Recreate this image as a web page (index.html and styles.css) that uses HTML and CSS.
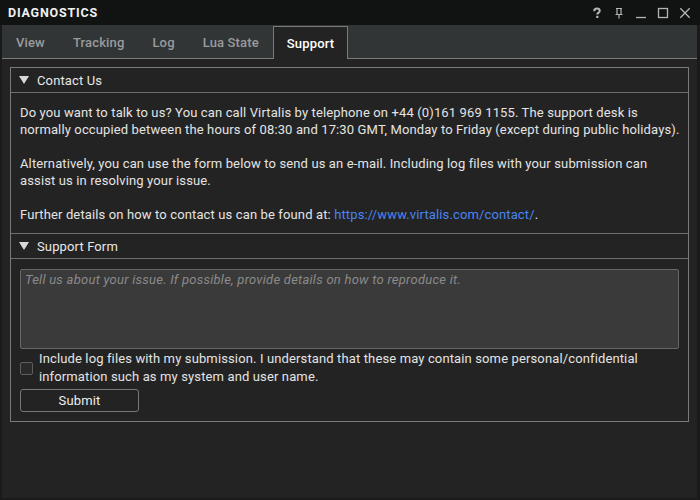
FILE: index.html
```html
<!DOCTYPE html>
<html>
<head>
<meta charset="utf-8">
<link rel="stylesheet" href="styles.css">
</head>
<body>
<div class="window">
  <div class="titlebar">
    <span class="title">DIAGNOSTICS</span>
    <div class="controls">
      <svg class="ctl" width="12" height="12" viewBox="0 0 12 12"><path d="M3.2 4.2 C3.2 2.5 4.4 1.6 6 1.6 C7.6 1.6 8.7 2.5 8.7 3.9 C8.7 5.6 6.3 5.7 6.3 7.6" fill="none" stroke="#b4b4b4" stroke-width="2"/><rect x="5.2" y="8.8" width="2.2" height="2.2" fill="#b4b4b4"/></svg>
      <svg class="ctl" width="12" height="12" viewBox="0 0 12 12"><path d="M3 1.5 H9 M4 1.5 V7 M8 1.5 V7 M2.5 7.5 H9.5 M6 7.5 V11.5" fill="none" stroke="#b4b4b4" stroke-width="1.2"/></svg>
      <svg class="ctl" width="12" height="12" viewBox="0 0 12 12"><path d="M1 10.5 H11" stroke="#b4b4b4" stroke-width="1.3"/></svg>
      <svg class="ctl" width="12" height="12" viewBox="0 0 12 12"><rect x="1.5" y="1.5" width="9" height="9" fill="none" stroke="#b4b4b4" stroke-width="1.3"/></svg>
      <svg class="ctl" width="12" height="12" viewBox="0 0 12 12"><path d="M1.3 1.3 L10.7 10.7 M10.7 1.3 L1.3 10.7" stroke="#b4b4b4" stroke-width="1.3"/></svg>
    </div>
  </div>
  <div class="tabbar">
    <div class="tab">View</div>
    <div class="tab">Tracking</div>
    <div class="tab">Log</div>
    <div class="tab">Lua State</div>
    <div class="tab active">Support</div>
  </div>
  <div class="content">
    <div class="group">
      <div class="section-head"><svg class="tri" width="10" height="8" viewBox="0 0 10 8"><path d="M0 0 H10 L5 8 Z" fill="#d8d8d8"/></svg>Contact Us</div>
      <div class="section-body text">
        <p>Do you want to talk to us? You can call Virtalis by telephone on +44 (0)161 969 1155. The support desk is<br>normally occupied between the hours of 08:30 and 17:30 GMT, Monday to Friday (except during public holidays).</p>
        <p>Alternatively, you can use the form below to send us an e-mail. Including log files with your submission can<br>assist us in resolving your issue.</p>
        <p>Further details on how to contact us can be found at: <a class="link">https://www.virtalis.com/contact/</a>.</p>
      </div>
      <div class="section-head"><svg class="tri" width="10" height="8" viewBox="0 0 10 8"><path d="M0 0 H10 L5 8 Z" fill="#d8d8d8"/></svg>Support Form</div>
      <div class="section-body form">
        <div class="textarea"><span class="placeholder">Tell us about your issue. If possible, provide details on how to reproduce it.</span></div>
        <div class="check-row">
          <span class="checkbox"></span>
          <span class="check-label">Include log files with my submission. I understand that these may contain some personal/confidential<br>information such as my system and user name.</span>
        </div>
        <div class="button">Submit</div>
      </div>
    </div>
  </div>
</div>
</body>
</html>
```

FILE: styles.css
```css
html, body {
  margin: 0;
  padding: 0;
  background: #1a1a1a;
}
body {
  font-family: Roboto, "Noto Sans", sans-serif;
  font-size: 13px;
  letter-spacing: 0.13px;
  color: #e4e4e4;
}
.window {
  width: 700px;
  height: 500px;
  box-sizing: border-box;
  display: flex;
  flex-direction: column;
  background: #232323;
  border-left: 2px solid #1a1a1a;
  border-right: 3px solid #1a1a1a;
  border-bottom: 2px solid #1a1a1a;
}
.titlebar {
  height: 25px;
  flex: none;
  background: #111313;
  display: flex;
  align-items: center;
  justify-content: space-between;
  padding: 0 0 0 8px;
  margin-left: -2px;
  margin-right: -3px;
}
.title {
  font-weight: bold;
  font-size: 12.5px;
  color: #f0f0f0;
  letter-spacing: 0.8px;
}
.controls {
  display: flex;
  align-items: center;
  gap: 10px;
  padding-right: 9px;
  margin-top: 1px;
}
.ctl { display: block; }
.tabbar {
  height: 34px;
  flex: none;
  box-sizing: border-box;
  background: #313536;
  border-bottom: 1px solid #7a7a7a;
  display: flex;
  align-items: flex-end;
}
.tab {
  height: 32px;
  box-sizing: border-box;
  padding: 0 13px 0 13px;
  display: flex;
  align-items: center;
  color: #9a9c9c;
  font-weight: 500;
  font-size: 13px;
  letter-spacing: 0.15px;
  border: 1px solid transparent;
  border-bottom: none;
}
.tab.active {
  background: #232323;
  border-color: #7a7a7a;
  color: #ffffff;
  margin-bottom: -1px;
  height: 33px;
}
.content {
  padding: 8px 8px 0 8px;
}
.group {
  border: 1px solid #7a7a7a;
}
.section-head {
  height: 24px;
  display: flex;
  align-items: center;
  padding-left: 8px;
  color: #e8e8e8;
  font-size: 13px;
}
.tri {
  display: block;
  margin-right: 8px;
  flex: none;
}
.section-body {
  border-top: 1px solid #6e6e6e;
  border-bottom: 1px solid #6e6e6e;
}
.section-body.form {
  border-bottom: none;
}
.text {
  padding: 11px 9px 10px 9px;
  line-height: 17px;
  white-space: nowrap;
}
.text p {
  margin: 0 0 17px 0;
}
.text p:last-child { margin-bottom: 0; }
.link { color: #4a86f0; }
.form {
  padding: 10px 9px 9px 9px;
}
.textarea {
  height: 74px;
  background: #3a3a3a;
  border: 1px solid #666;
  border-radius: 2px;
  padding: 2px 4px;
  box-sizing: content-box;
}
.placeholder {
  color: #8a8a8a;
  font-style: italic;
  letter-spacing: 0.25px;
}
.check-row {
  display: flex;
  align-items: center;
  margin-top: 1px;
  line-height: 18px;
  white-space: nowrap;
}
.checkbox {
  width: 11px;
  height: 11px;
  border: 1px solid #5e5e5e;
  border-radius: 2px;
  background: #2a2a2a;
  flex: none;
  margin-right: 6px;
}
.button {
  margin-top: 3px;
  width: 117px;
  height: 21px;
  border: 1px solid #777;
  border-radius: 3px;
  display: flex;
  align-items: center;
  justify-content: center;
  color: #eeeeee;
}
```
